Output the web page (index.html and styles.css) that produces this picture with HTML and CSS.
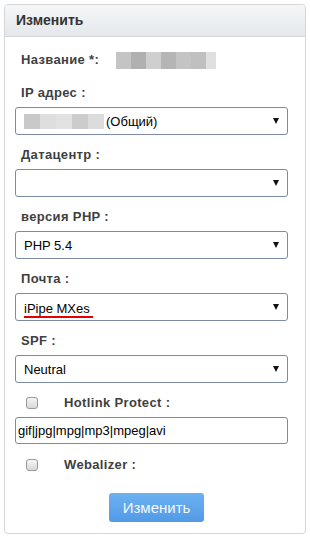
FILE: index.html
```html
<!DOCTYPE html>
<html lang="ru">
<head>
    <meta charset="UTF-8">
    <meta name="viewport" content="width=device-width, initial-scale=1.0">
    <title>Изменить</title>
    <link rel="stylesheet" href="styles.css">
</head>

<body>
    <div class="panel">
        <div class="panel-head">Изменить</div>

        <div class="panel-body">
            <div class="name-row">
                <span class="label">Название *:</span>
                <span class="blur">
                    <i class="px p1"></i><i class="px p2"></i><i class="px p3"></i><i class="px p4"></i><i class="px p1"></i><i class="px p5"></i><i class="px p6"></i>
                </span>
            </div>

            <div class="field">
                <div class="label">IP адрес :</div>
                <div class="select">
                    <span class="value"><span class="blur small"><i class="px q1"></i><i class="px q2"></i><i class="px q3"></i><i class="px q4"></i><i class="px q5"></i></span><span>(Общий)</span></span>
                    <span class="arrow"></span>
                </div>
            </div>

            <div class="field">
                <div class="label">Датацентр :</div>
                <div class="select">
                    <span class="value"></span>
                    <span class="arrow"></span>
                </div>
            </div>

            <div class="field">
                <div class="label">версия PHP :</div>
                <div class="select">
                    <span class="value">PHP 5.4</span>
                    <span class="arrow"></span>
                </div>
            </div>

            <div class="field">
                <div class="label">Почта :</div>
                <div class="select">
                    <span class="value mark">iPipe MXes&nbsp;</span>
                    <span class="arrow"></span>
                </div>
            </div>

            <div class="field">
                <div class="label">SPF :</div>
                <div class="select">
                    <span class="value">Neutral</span>
                    <span class="arrow"></span>
                </div>
            </div>

            <div class="check-row">
                <span class="check"></span>
                <span class="label">Hotlink Protect :</span>
            </div>
            <div class="text-input">gif|jpg|mpg|mp3|mpeg|avi</div>

            <div class="check-row webalizer">
                <span class="check"></span>
                <span class="label">Webalizer :</span>
            </div>

            <div class="actions">
                <button class="btn">Изменить</button>
            </div>
        </div>
    </div>
</body>
</html>
```

FILE: styles.css
```css
body {
    margin: 0;
    padding: 4px;
    background: #fff;
    font-family: "Liberation Sans", Arial, sans-serif;
    font-size: 13px;
    color: #000;
}
.panel {
    border: 1px solid #d6d6d6;
    border-radius: 4px;
    box-sizing: border-box;
    height: 530px;
}
.panel-head {
    height: 31px;
    line-height: 31px;
    padding-left: 11px;
    font-size: 14px;
    font-weight: bold;
    color: #333;
    background: linear-gradient(#f5f6f7, #e4e8eb);
    border-bottom: 1px solid #d4d8db;
    border-radius: 3px 3px 0 0;
}
.panel-body {
    padding: 13px 17px 10px 10px;
}
.label {
    font-size: 13px;
    font-weight: bold;
    letter-spacing: 0.35px;
    color: #3f3f3f;
    line-height: 16px;
}
.name-row {
    display: flex;
    align-items: center;
    height: 20px;
    padding-left: 6px;
}
.name-row .label { width: 95px; }
.blur { display: flex; }
.px {
    display: block;
    width: 15px;
    height: 17px;
}
.blur.small .px { height: 15px; width: 16px; }
.blur.small { margin-right: 2px; }
.p1 { background: #c4c4c4; }
.p2 { background: #b0b0b0; }
.p3 { background: #cfcfcf; }
.p4 { background: #b5b5b5; }
.p5 { background: #c0c0c0; }
.p6 { background: #e0e0e0; width: 10px; }
.q1 { background: #c9c9c9; }
.q2 { background: #dedede; }
.q3 { background: #e2e2e2; }
.q4 { background: #cccccc; }
.q5 { background: #dcdcdc; }
.field { margin-top: 15px; }
.field + .field { margin-top: 12px; }
.field .label {
    padding-left: 6px;
    margin-bottom: 6px;
}
.select {
    display: flex;
    align-items: center;
    height: 28px;
    box-sizing: border-box;
    border: 1px solid #7d8aa6;
    border-radius: 3px;
    padding: 0 8px;
}
.value {
    flex: 1;
    display: flex;
    align-items: center;
    white-space: nowrap;
}
.value.mark {
    flex: none;
    margin-right: auto;
    border-bottom: 2px solid #e60000;
    line-height: 15px;
    margin-top: 5px;
}
.arrow {
    width: 0;
    height: 0;
    border-left: 3px solid transparent;
    border-right: 3px solid transparent;
    border-top: 6px solid #111;
}
.check-row {
    display: flex;
    align-items: center;
    height: 20px;
    margin-top: 10px;
    padding-left: 11px;
}
.check {
    width: 12px;
    height: 12px;
    box-sizing: border-box;
    border: 1px solid #9a9a9a;
    border-radius: 3px;
    background: linear-gradient(#f4f4f4, #d8d8d8);
    margin-right: 26px;
}
.check-row.webalizer { margin-top: 11px; }
.text-input {
    margin-top: 4px;
    height: 27px;
    box-sizing: border-box;
    border: 1px solid #7d8aa6;
    border-radius: 3px;
    padding-left: 2px;
    line-height: 25px;
}
.actions {
    display: flex;
    justify-content: center;
    margin-top: 18px;
}
.btn {
    width: 95px;
    height: 29px;
    margin-left: 10px;
    border: none;
    border-radius: 3px;
    background: linear-gradient(#6bb1f2, #529ae6);
    color: #f4f8fd;
    font-family: "Liberation Sans", Arial, sans-serif;
    font-size: 15px;
    font-weight: normal;
    padding: 0;
}
```
